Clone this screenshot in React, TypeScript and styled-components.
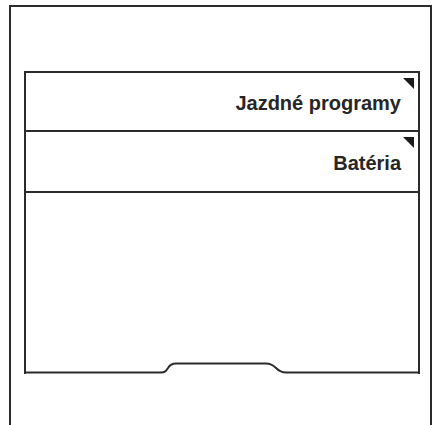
import React from 'react';
import styled, { createGlobalStyle } from 'styled-components';

const GlobalStyle = createGlobalStyle`
  html, body {
    margin: 0;
    padding: 0;
    background: #ffffff;
    overflow: hidden;
  }
`;

const Frame = styled.div`
  box-sizing: border-box;
  margin: 5px 0 0 9px;
  width: 423px;
  height: 420px;
  border: 2px solid #2b2b2b;
  border-bottom: none;
  padding: 64px 10px 0 13px;
`;

const Panel = styled.div`
  box-sizing: border-box;
  display: flex;
  flex-direction: column;
  height: 303px;
  border: 2px solid #2b2b2b;
  border-bottom: none;
`;

const Row = styled.div<{ h: number }>`
  position: relative;
  box-sizing: border-box;
  height: ${(p) => p.h}px;
  border-bottom: 2px solid #2b2b2b;
  display: flex;
  align-items: center;
  justify-content: flex-end;
  padding: 4px 17px 0 0;
  font-family: 'Liberation Sans', Arial, sans-serif;
  font-weight: bold;
  font-size: 20px;
  color: #262626;
`;

const Corner = styled.span`
  position: absolute;
  top: 5px;
  right: 4px;
  width: 0;
  height: 0;
  border-top: 11px solid #1a1a1a;
  border-left: 11px solid transparent;
`;

const Filler = styled.div`
  flex: 1;
`;

const BottomEdge = styled.svg`
  display: block;
  margin: 0 -2px;
`;

const Item: React.FC<{ label: string; h: number }> = ({ label, h }) => (
  <Row h={h}>
    <Corner />
    {label}
  </Row>
);

const App: React.FC = () => (
  <>
    <GlobalStyle />
    <Frame>
      <Panel>
        <Item label="Jazdné programy" h={59} />
        <Item label="Batéria" h={61} />
        <Filler />
        <BottomEdge width="396" height="12" viewBox="0 0 396 12">
          <path
            d="M0 10.5 H137 C141 10.5 142 9 144 6 C146 2.5 148 1.5 152 1.5 H242 C247 1.5 249 3 252 6 C255 9 257 10.5 262 10.5 H396"
            fill="none"
            stroke="#2b2b2b"
            strokeWidth="2"
          />
        </BottomEdge>
      </Panel>
    </Frame>
  </>
);

export default App;
